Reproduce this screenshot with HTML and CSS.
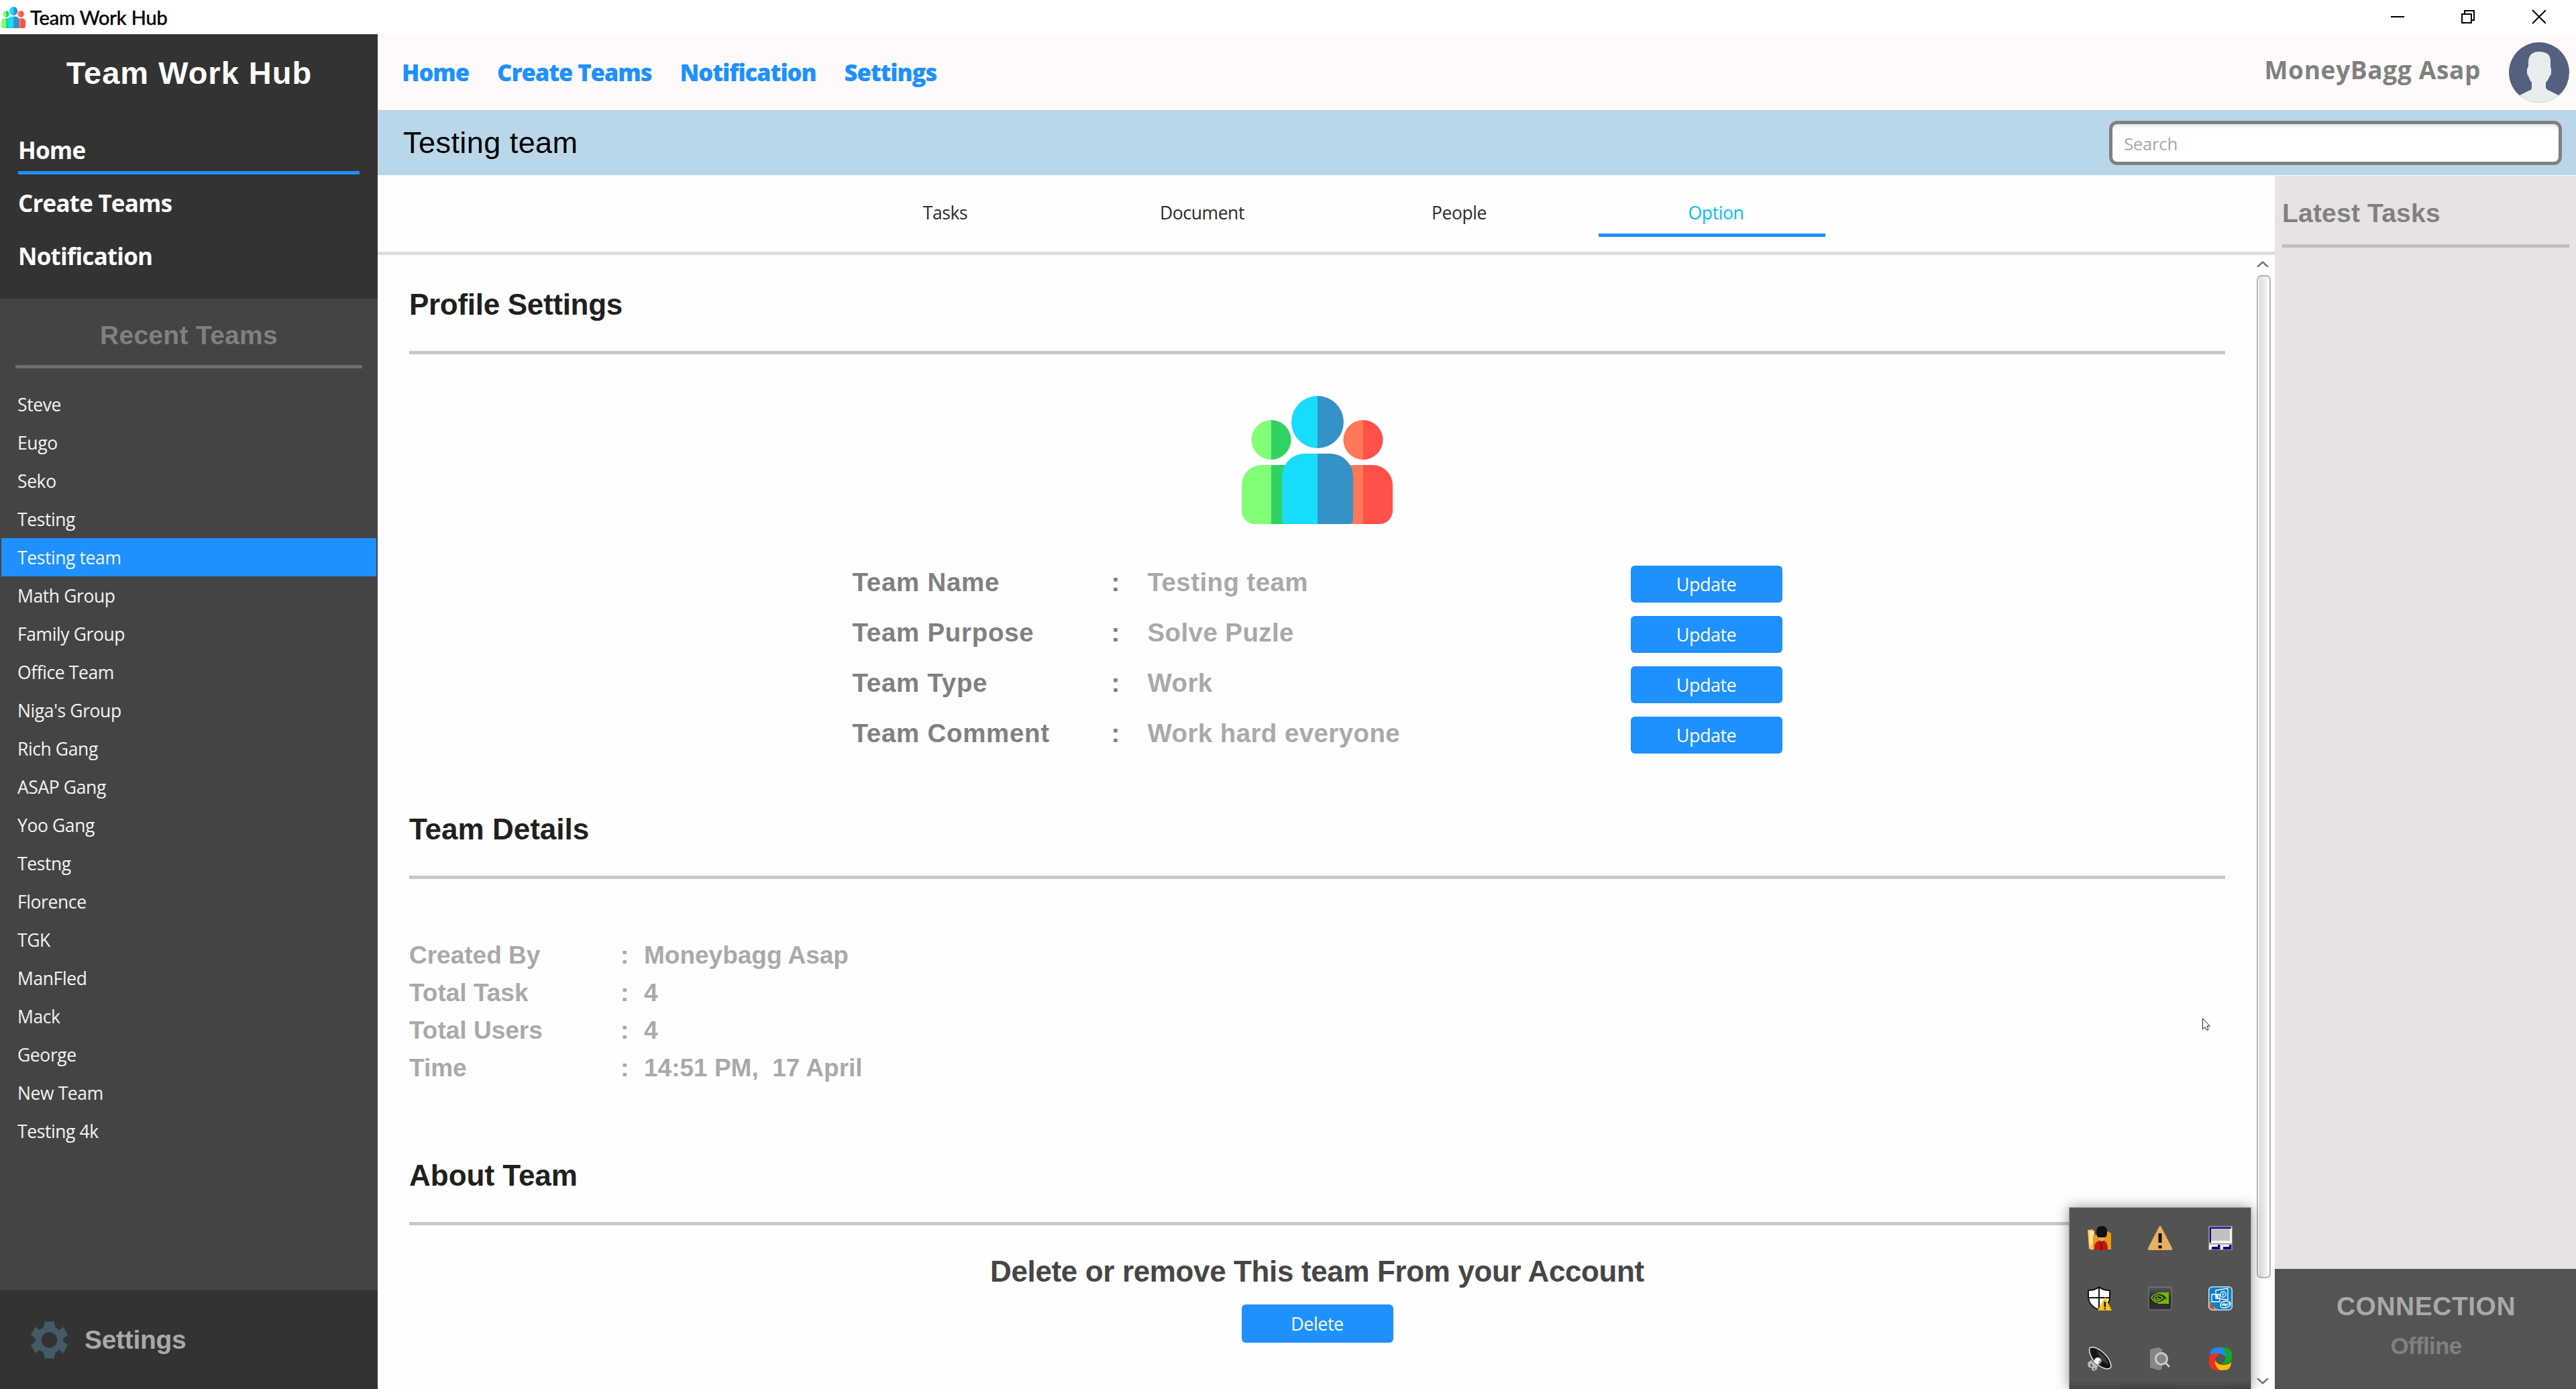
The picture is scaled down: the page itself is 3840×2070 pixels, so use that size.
FILE: index.html
```html
<!DOCTYPE html>
<html lang="en">
<head>
<meta charset="utf-8">
<title>Team Work Hub</title>
<link rel="stylesheet" href="styles.css">
</head>
<body>
<svg class="defs" width="0" height="0" aria-hidden="true">
  <symbol id="team" viewBox="0 0 225 191" preserveAspectRatio="none">
    <path fill="#80ff77" d="M44 36a29.500 29.500 0 0 0 0 59zM44 103H30A30 30 0 0 0 0 133V171A20 20 0 0 0 20 191H44z"/>
    <path fill="#31d264" d="M44 36a29.500 29.500 0 0 1 0 59zM44 103H70V191H44z"/>
    <path fill="#ff7858" d="M181 36a29.500 29.500 0 0 0 0 59zM155 103H181V191H155z"/>
    <path fill="#ff5049" d="M181 36a29.500 29.500 0 0 1 0 59zM181 103H195A30 30 0 0 1 225 133V171A20 20 0 0 1 205 191H181z"/>
    <path fill="#17dcfb" d="M113 0a39 39 0 0 0 0 78zM113 86H94A34 34 0 0 0 60 120V183Q60 191 66 191H113z"/>
    <path fill="#3592c7" d="M113 0a39 39 0 0 1 0 78zM113 86H132A34 34 0 0 1 166 120V183Q166 191 160 191H113z"/>
  </symbol>
</svg>
<div class="window">
  <header class="titlebar">
    <svg class="app-icon"><use href="#team"/></svg>
    <span class="app-name">Team Work Hub</span>
    <svg class="win-buttons" viewBox="0 0 240 50" fill="none" stroke="#000" stroke-width="2">
      <path d="M9 24H29M115 20H129V33H115zM119 20V15H133V29H129"/>
      <path d="M220 14L240 34M240 14L220 34"/>
    </svg>
  </header>
  <div class="body">
    <aside class="sidebar">
      <div class="side-top">
        <h1 class="side-title">Team Work Hub</h1>
        <nav class="side-nav">
          <a class="side-link current">Home</a>
          <a class="side-link">Create Teams</a>
          <a class="side-link">Notification</a>
        </nav>
      </div>
      <div class="recent">
        <h2 class="recent-title">Recent Teams</h2>
        <ul class="team-list">
          <li>Steve</li><li>Eugo</li><li>Seko</li><li>Testing</li>
          <li class="selected">Testing team</li>
          <li>Math Group</li><li>Family Group</li><li>Office Team</li><li>Niga's Group</li>
          <li>Rich Gang</li><li>ASAP Gang</li><li>Yoo Gang</li><li>Testng</li><li>Florence</li>
          <li>TGK</li><li>ManFled</li><li>Mack</li><li>George</li><li>New Team</li><li>Testing 4k</li>
        </ul>
      </div>
      <div class="side-foot">
        <svg class="gear" viewBox="-28 -28 56 56" fill="#455a64">
          <path fill-rule="evenodd" d="M-7-28H7L9-19Q13-17 15-15L21-20L28-8L21-2V2L28 8L21 20L15 15Q13 17 9 19L7 28H-7L-9 19Q-13 17-15 15L-21 20L-28 8L-21 2V-2L-28-8L-21-20L-15-15Q-13-17-9-19zM0-12A12 12 0 1 0 0 12A12 12 0 1 0 0-12z"/>
        </svg>
        <span>Settings</span>
      </div>
    </aside>

    <div class="content">
      <div class="topnav">
        <nav class="top-links"><a>Home</a><a>Create Teams</a><a>Notification</a><a>Settings</a></nav>
        <span class="user">MoneyBagg Asap</span>
        <svg class="avatar" viewBox="0 0 90 90">
          <clipPath id="round"><circle cx="45" cy="45" r="45"/></clipPath>
          <g clip-path="url(#round)">
            <path fill="#556080" d="M0 0H90V90H0z"/>
            <path fill="#e7eced" d="M45 14C34 14 29 20 29 30V36L27 40V46Q27 49 29 50Q31 57 34 60V68Q34 71 30 72L10 82V92H80V82L60 72Q55 70 55 67V60Q59 56 61 50Q63 49 63 46V40L62 36V28Q62 14 45 14z"/>
          </g>
        </svg>
      </div>
      <div class="teambar">
        <span class="teambar-name">Testing team</span>
        <div class="search">Search</div>
      </div>
      <div class="columns">
        <main class="main">
          <nav class="tabs">
            <a>Tasks</a><a>Document</a><a>People</a><a class="active">Option</a>
          </nav>
          <div class="scroller">
            <div class="page">
              <h2 class="section first">Profile Settings</h2>
              <svg class="team-icon"><use href="#team"/></svg>
              <div class="fields">
                <div class="field"><b>Team Name</b><b>:</b><span>Testing team</span><button>Update</button></div>
                <div class="field"><b>Team Purpose</b><b>:</b><span>Solve Puzle</span><button>Update</button></div>
                <div class="field"><b>Team Type</b><b>:</b><span>Work</span><button>Update</button></div>
                <div class="field"><b>Team Comment</b><b>:</b><span>Work hard everyone</span><button>Update</button></div>
              </div>
              <h2 class="section second">Team Details</h2>
              <div class="details">
                <span>Created By</span><span>:</span><span>Moneybagg Asap</span>
                <span>Total Task</span><span>:</span><span>4</span>
                <span>Total Users</span><span>:</span><span>4</span>
                <span>Time</span><span>:</span><span>14:51 PM,&nbsp; 17 April</span>
              </div>
              <h2 class="section third">About Team</h2>
              <p class="remove">Delete or remove This team From your Account</p>
              <button class="delete">Delete</button>
            </div>
            <div class="scrollbar">
              <svg viewBox="0 0 18 9" fill="none" stroke="#777" stroke-width="2.500"><path d="M1 9L9 1.500L17 9"/></svg>
              <div class="thumb"></div>
              <svg viewBox="0 0 18 9" fill="none" stroke="#777" stroke-width="2.500"><path d="M1 0L9 7.500L17 0"/></svg>
            </div>
          </div>
        </main>
        <aside class="right">
          <h2 class="latest">Latest Tasks</h2>
          <div class="connection"><span class="conn">CONNECTION</span><span class="off">Offline</span></div>
        </aside>
      </div>
    </div>
  </div>

  <div class="tray">
    <svg viewBox="0 0 36 36">
      <path fill="#ffc44d" d="M0 6L8 5V36L2 34z"/><path fill="#ffe39a" d="M2 8L10 7V24L3 30z"/><path fill="#f09a12" d="M8 14L30 8L35 11V35H8z"/>
      <path fill="#c4171b" d="M10 36Q9 24 17 22H25Q30 24 30 36z"/><path fill="#8c1115" d="M19 24H22V36H19z"/>
      <path fill="#d6a878" d="M17 15H25V20Q21 26 17 20z"/><path fill="#111" d="M13 9Q13 0 21 0Q29 0 29 8Q29 17 25 17H17Q13 17 13 9z"/>
    </svg>
    <svg viewBox="0 0 36 36"><path fill="#e6b05e" d="M16.500 1Q18-1 19.500 1L36 33V36H0V33z"/><path fill="#111" d="M15.500 11H20.500V25H15.500zM15.500 29H20.500V33.500H15.500z"/></svg>
    <svg viewBox="0 0 36 36"><path fill="#f4f4f4" stroke="#8b8b8b" d="M.5.5H35.500V35.500H.5z"/><path fill="#0a0a84" d="M1.500 1.500H34V4H4V25H1.500z"/><path fill="#c1c1c1" d="M4 4H32V22H4z"/><path fill="#8b8b8b" d="M1 26H35V27.500H1z"/><path fill="#0a0a84" d="M5 31H14V28H17.500V35H5zM22 31H31V28H34.500V35H22z"/></svg>
    <svg viewBox="0 0 36 36"><path fill="#fff" stroke="#111" stroke-width="2" d="M17 1Q23 6 33 6V17Q32 29 17 35Q2 29 1 17V6Q11 6 17 1zM17 1V35M1 17H33"/><path fill="#ffc20e" d="M26 16L36 36H15z"/><path fill="#111" d="M24.500 23H27V31H24.500zM24.500 32.500H27V34.500H24.500z"/></svg>
    <svg viewBox="0 0 36 36">
      <defs><linearGradient id="nv" x2="0" y2="1"><stop offset="0" stop-color="#565a5d"/><stop offset=".5" stop-color="#25282a"/><stop offset="1" stop-color="#303234"/></linearGradient></defs>
      <rect x="1" y="1" width="34" height="34" rx="2" fill="url(#nv)" stroke="#8a8a8a"/><path fill="#76b900" d="M15 9H31V26H15z"/>
      <path fill="#25282a" d="M15 11Q24 12 28 18Q22 25 15 24z"/><path fill="none" stroke="#76b900" stroke-width="1.700" d="M15 11Q8 12 5 17Q9 24 16 24Q22 24 26 18M15 14Q10 15 9 18Q12 22 17 21Q20 20 22 17Q19 14 15 14M15 17Q12 18 15 19H18"/>
    </svg>
    <svg viewBox="0 0 36 36">
      <rect x=".75" y=".75" width="34.500" height="34.500" rx="5" fill="#0b7fc9" stroke="#cfe3f2" stroke-width="1.500"/><path fill="#e2a23a" d="M1.500 20Q4 31 16 34.500H6Q1.500 34 1.500 29z"/><path fill="#d9472b" d="M2 25L6 28L9 34H6Q2 33 2 29z"/>
      <path fill="none" stroke="#fff" stroke-width="1.300" d="M11 6L29 3V20L11 18zM5 12H17V23H5zM18 29Q18 22 26 22Q33 22 33 26Q32 32 24 32Q18 32 18 29zM20 28L22 26V29M24 29V26L26 29V26M28 29V25M31 24V28"/><circle cx="22" cy="12" r="4" fill="none" stroke="#fff" stroke-width="1.300"/><path fill="#fff" d="M21 10L24 12L21 14zM11 13H15V18H11z"/>
    </svg>
    <svg viewBox="0 0 36 36">
      <path fill="#bbb" d="M0 24L5 20L15 29L13 35L7 36L6 32L1 30z"/><path fill="#444" d="M4 24L8 29L5 30zM9 31L12 34H9z"/>
      <path fill="#141414" stroke="#e8e8e8" stroke-width="1.500" d="M3 2Q8-2 20 6Q34 17 35 29Q35 33 28 33Q18 31 9 21Q1 9 3 2z"/><path fill="#3c3c3c" d="M13 5Q29 14 31 27L20 20z"/><circle cx="15" cy="21" r="5" fill="#f5f5f5"/><path fill="#999" d="M16 22L21 19Q22 24 17 26z"/>
    </svg>
    <svg viewBox="0 0 36 36"><path fill="#868686" d="M3 4L16 1L21 4V33L16 35L3 31z"/><path stroke="#ccc" stroke-width="3" d="M26 24L32 30"/><circle cx="20" cy="18" r="8.500" fill="#858585" stroke="#ccc" stroke-width="3"/></svg>
    <svg viewBox="0 0 36 36">
      <path fill="#2986ea" d="M2 12Q3 1 14 1H22Q30 5 27 19Q24 9 13 10Q6 10 2 12z"/>
      <path fill="#12aa24" d="M20 1H24Q35 2 35 12V19Q32 27 18 25Q27 21 26 12Q25 5 20 1z"/>
      <path fill="#fbbc05" d="M34 23Q34 35 23 35H15Q6 32 9 18Q13 28 23 27Q30 27 34 23z"/>
      <path fill="#ef2d20" d="M17 35H12Q1 34 1 23V15Q5 8 19 11Q9 14 10 24Q11 31 17 35z"/>
      <circle cx="18" cy="18" r="6.500" fill="#535353"/>
    </svg>
  </div>
  <svg class="cursor" viewBox="0 0 12 19"><path fill="#fff" stroke="#1a1a24" d="M.5.7V16.800L4 13.500L6.500 18.300L9 17.200L7 12.300H11.500z"/></svg>
</div>
</body>
</html>
```
FILE: styles.css
```css
* { box-sizing: border-box; }
body, h1, h2, p, ul { margin: 0; padding: 0; }
body { background: #fff; }
.defs { position: absolute; }
a, span, b { white-space: pre; }
svg { display: block; flex: none; }

.window {
  position: relative;
  width: 3840px;
  height: 2070px;
  overflow: hidden;
  display: flex;
  flex-direction: column;
  font-family: "Open Sans", "Noto Sans", sans-serif;
  font-size: 27px;
}
.titlebar { height: 51px; flex: none; display: flex; align-items: center; background: #fff; }
.app-icon { width: 36px; height: 32px; margin-left: 2px; }
.app-name { margin-left: 7px; font: 29px/50px Lato, sans-serif; letter-spacing: -.1px; color: #000; -webkit-text-stroke: .5px #000; }
.win-buttons { width: 240px; height: 50px; margin-left: auto; margin-right: 45px; }
.body { flex: 1; display: flex; min-height: 0; }

/* Left sidebar */
.sidebar { width: 563px; flex: none; display: flex; flex-direction: column; color: #fff; }
.side-top { height: 394px; background: #333; }
.side-title { padding: 28px 0 0 1px; text-align: center; font: bold 47px/60px "Liberation Sans", Arial, sans-serif; letter-spacing: 1px; }
.side-nav { padding: 50px 27px 0; display: flex; flex-direction: column; }
.side-link { height: 79px; font-size: 35px; font-weight: 700; line-height: 70px; letter-spacing: -.8px; }
.side-link.current { height: 71px; border-bottom: 5px solid #1e90ff; margin-bottom: 8px; }
.recent { flex: 1; background: #444; }
.recent-title { height: 104px; margin: 0 23px; padding-top: 25px; border-bottom: 5px solid #6e6e6e; text-align: center; color: #808080; font: bold 39px/60px "Liberation Sans", Arial, sans-serif; letter-spacing: .3px; }
.team-list { list-style: none; padding: 25px 2px 0; }
.team-list li { height: 57px; padding-left: 24px; font-size: 26.500px; line-height: 59px; letter-spacing: -.4px; color: #f4f4f4; }
.team-list .selected { background: #1e90ff; }
.side-foot { height: 147px; display: flex; align-items: center; gap: 25px; padding-left: 46px; background: #333; color: #a9a9a9; font: bold 39px/60px "Liberation Sans", Arial, sans-serif; letter-spacing: -.3px; }
.gear { width: 55px; height: 56px; }

/* Header bars */
.content { flex: 1; display: flex; flex-direction: column; min-width: 0; }
.topnav { height: 113px; display: flex; align-items: center; padding: 0 10px 0 36px; background: #fffafa; }
.top-links { display: flex; gap: 42px; color: #1e90ff; font-size: 34.500px; font-weight: 800; line-height: 60px; letter-spacing: -1.050px; }
.user { margin-left: auto; padding-bottom: 8px; color: #808080; font-size: 37px; font-weight: 700; line-height: 60px; letter-spacing: .65px; }
.avatar { width: 90px; height: 90px; margin-left: 42px; }
.teambar { height: 97px; display: flex; align-items: center; justify-content: space-between; padding: 0 21px 0 38px; background: #bad7e9; }
.teambar-name { color: #000; font: 45px/60px "Liberation Sans", Arial, sans-serif; letter-spacing: .45px; }
.search { width: 675px; height: 66px; padding-left: 17px; border: 5px solid #808080; border-radius: 12px; background: #fff; box-shadow: inset 0 4px 6px -2px #ddd; color: #aaa; font-size: 26px; line-height: 58px; letter-spacing: -.4px; }
.columns { flex: 1; display: flex; min-height: 0; }

/* Tabs */
.main { flex: 1; display: flex; flex-direction: column; min-width: 0; background: #fefefe; }
.tabs { height: 119px; flex: none; display: flex; gap: 45px; padding: 22px 0 0 671px; border-bottom: 5px solid #dcdcdc; }
.tabs a { width: 338px; height: 70px; padding-left: 12px; text-align: center; color: #2b2b2b; font-size: 26.500px; line-height: 68px; letter-spacing: -.4px; }
.tabs .active { color: #00bfff; border-bottom: 5px solid #1e90ff; }

/* Scrolling page */
.scroller { flex: 1; display: flex; min-height: 0; }
.page { width: 2754px; flex: none; padding: 0 0 0 47px; display: flex; flex-direction: column; }
.section { height: 104px; border-bottom: 5px solid #c8c8c8; color: #202020; font: bold 44px/60px "Liberation Sans", Arial, sans-serif; letter-spacing: 0; }
.first { margin-top: 44px; letter-spacing: -.3px; }
.second { margin-top: 83px; }
.third { margin-top: 102px; }
.team-icon { width: 225px; height: 191px; margin: 62px auto 0; }
.fields { width: 1386px; margin: 62px auto 0; display: flex; flex-direction: column; gap: 20px; }
.field { display: grid; grid-template-columns: 386px 54px 720px 226px; height: 55px; font: bold 38.500px/50px "Liberation Sans", Arial, sans-serif; color: #808080; letter-spacing: .7px; }
.field span { color: #a9a9a9; letter-spacing: .4px; }
button { height: 55px; border: 0; border-radius: 6px; padding: 0; background: #1e90ff; color: #fff; font: 27px/55px "Open Sans", sans-serif; letter-spacing: -.5px; }
.details { margin-top: 86px; height: 224px; display: grid; grid-template-columns: 315px 35px 1fr; grid-auto-rows: 56px; color: #a9a9a9; font: bold 37px/56px "Liberation Sans", Arial, sans-serif; }
.remove { margin-top: 39px; text-align: center; color: #464646; font: bold 44px/60px "Liberation Sans", Arial, sans-serif; letter-spacing: -.37px; }
.delete { width: 226px; height: 57px; margin: 19px auto 0; line-height: 57px; }
.scrollbar { width: 21px; flex: none; margin-left: 47px; padding: 9px 0 7px; display: flex; flex-direction: column; }
.scrollbar svg { width: 18px; height: 9px; }
.thumb { width: 21px; height: 1495px; margin: 12px 0 auto; border: 2px solid #b4b4b4; border-radius: 7px; background: linear-gradient(90deg, #fff 0 1px, #dedede 2px, #ececec 60%, #fff); }

/* Right panel */
.right { width: 449px; flex: none; border-top: 1px solid #fff; display: flex; flex-direction: column; justify-content: space-between; background: #e7e3e2; }
.latest { height: 107px; margin: 0 10px 0 11px; padding-top: 26px; border-bottom: 5px solid #bebdbb; color: #808080; font: bold 39px/60px "Liberation Sans", Arial, sans-serif; letter-spacing: .2px; }
.connection { height: 179px; padding: 26px 0 0 2px; display: flex; flex-direction: column; align-items: center; background: #545454; font: bold 39px/60px "Liberation Sans", Arial, sans-serif; }
.conn { color: #a9a9a9; letter-spacing: .5px; }
.off { color: #808080; font-size: 35px; line-height: 57px; letter-spacing: -.7px; }

/* Notification tray, floating above the window */
.tray { position: absolute; left: 3084px; top: 1799px; width: 272px; height: 271px; padding: 27px; display: grid; grid-template-columns: repeat(3, 36px); grid-auto-rows: 36px; gap: 54px; border: 1px solid #9a9a9a; border-bottom: 0; background: linear-gradient(#535353 95%, #444); box-shadow: 0 0 18px rgba(0, 0, 0, .4); }
.tray svg { width: 36px; height: 36px; }
.cursor { position: absolute; left: 3283px; top: 1517px; width: 12px; height: 19px; }
```
